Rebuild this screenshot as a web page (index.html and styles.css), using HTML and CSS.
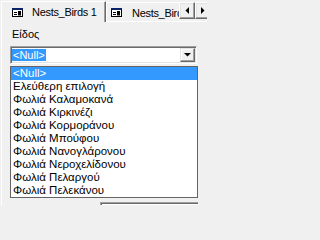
FILE: index.html
```html
<!DOCTYPE html>
<html>
<head>
<meta charset="utf-8">
<link rel="stylesheet" href="styles.css">
</head>
<body>
<div class="tabs">
  <div class="tab active">
    <svg class="ico" width="11" height="9" viewBox="0 0 11 9"><rect x="0.5" y="0.5" width="10" height="8" fill="#fff" stroke="#000"/><rect x="0" y="0" width="11" height="2" fill="#0a246a"/><path d="M2 4.5h3M2 6.5h3" stroke="#000"/><rect x="6.5" y="3.5" width="2" height="1.5" fill="none" stroke="#000"/><rect x="6.5" y="5.5" width="2" height="1.5" fill="none" stroke="#000"/></svg>
    <span>Nests_Birds 1</span>
  </div>
  <div class="tab inactive">
    <svg class="ico" width="11" height="9" viewBox="0 0 11 9"><rect x="0.5" y="0.5" width="10" height="8" fill="#fff" stroke="#000"/><rect x="0" y="0" width="11" height="2" fill="#0a246a"/><path d="M2 4.5h3M2 6.5h3" stroke="#000"/><rect x="6.5" y="3.5" width="2" height="1.5" fill="none" stroke="#000"/><rect x="6.5" y="5.5" width="2" height="1.5" fill="none" stroke="#000"/></svg>
    <span>Nests_Birds 2</span>
  </div>
  <div class="scroll">
    <div class="sbtn"><svg width="4" height="7" viewBox="0 0 4 7"><path d="M4 0V7L0.5 3.5Z" fill="#000"/></svg></div>
    <div class="sbtn"><svg width="4" height="7" viewBox="0 0 4 7"><path d="M0 0V7L3.5 3.5Z" fill="#000"/></svg></div>
  </div>
</div>
<div class="panel">
  <div class="label">Είδος</div>
  <div class="combo">
    <div class="field"><span class="sel">&lt;Null&gt;</span></div>
    <div class="dbtn"><svg width="7" height="4" viewBox="0 0 7 4"><path d="M0 0H7L3.5 3.5Z" fill="#000"/></svg></div>
  </div>
  <ul class="list">
    <li class="hl">&lt;Null&gt;</li>
    <li>Ελεύθερη επιλογή</li>
    <li>Φωλιά Καλαμοκανά</li>
    <li>Φωλιά Κιρκινέζι</li>
    <li>Φωλιά Κορμοράνου</li>
    <li>Φωλιά Μπούφου</li>
    <li>Φωλιά Νανογλάρονου</li>
    <li>Φωλιά Νεροχελίδονου</li>
    <li>Φωλιά Πελαργού</li>
    <li>Φωλιά Πελεκάνου</li>
  </ul>
  <div class="next"></div>
</div>
</body>
</html>
```

FILE: styles.css
```css
html, body {
  margin: 0;
  padding: 0;
  width: 207px;
  height: 205px;
  overflow: hidden;
  background: #f0f0f0;
}
body {
  font-family: "Liberation Sans", Arial, sans-serif;
  font-size: 11px;
  color: #000;
}
.tabs {
  position: relative;
  display: flex;
  align-items: flex-end;
  height: 21px;
  padding-left: 1px;
  box-sizing: border-box;
}
.tab {
  display: flex;
  align-items: center;
  flex: none;
  box-sizing: border-box;
  white-space: nowrap;
  overflow: hidden;
  background: #f0f0f0;
  border-top: 1px solid #fff;
  border-left: 1px solid #fff;
  font-size: 11px;
  letter-spacing: -0.3px;
}
.tab .ico {
  flex: none;
  display: block;
}
.tab.active {
  position: relative;
  z-index: 1;
  width: 105px;
  height: 21px;
  margin-bottom: -1px;
  padding-left: 10px;
  border-right: 1px solid #696969;
  box-shadow: inset -1px 0 #a0a0a0;
}
.tab.active span {
  margin-left: 9px;
}
.tab.inactive {
  width: 120px;
  height: 19px;
  padding-left: 4px;
  padding-top: 1px;
}
.tab.inactive span {
  margin-left: 10px;
}
.scroll {
  position: absolute;
  left: 179px;
  top: 2px;
  display: flex;
  z-index: 2;
}
.sbtn {
  width: 16px;
  height: 17px;
  box-sizing: border-box;
  background: #f0f0f0;
  border: 1px solid;
  border-color: #fff #696969 #696969 #fff;
  box-shadow: inset -1px -1px #a0a0a0, inset 1px 1px #e3e3e3;
  display: flex;
  align-items: center;
  justify-content: center;
}
.sbtn svg { display: block; }
.panel {
  border-top: 1px solid #fff;
  border-left: 1px solid #fff;
  margin-left: 1px;
  padding-left: 8px;
  height: 184px;
  box-sizing: border-box;
}
.label {
  padding-left: 2px;
  margin-top: 6px;
  line-height: 13px;
}
.combo {
  margin-top: 5px;
  width: 187px;
  height: 18px;
  box-sizing: border-box;
  border: 1px solid;
  border-color: #a0a0a0 #fff #fff #a0a0a0;
  box-shadow: inset 1px 1px #696969, inset -1px -1px #e3e3e3;
  background: #fff;
  padding: 1px;
  display: flex;
  align-items: center;
}
.field {
  flex: 1;
  display: flex;
}
.sel {
  background: #3399ff;
  color: #fff;
  height: 12px;
  line-height: 12px;
  padding: 0 1px;
}
.dbtn {
  width: 15px;
  height: 14px;
  box-sizing: border-box;
  background: #f0f0f0;
  border: 1px solid;
  border-color: #e3e3e3 #696969 #696969 #e3e3e3;
  box-shadow: inset -1px -1px #a0a0a0, inset 1px 1px #fff;
  display: flex;
  align-items: center;
  justify-content: center;
}
.dbtn svg { display: block; }
.list {
  list-style: none;
  margin: 2px 0 0 0;
  padding: 0;
  width: 188px;
  box-sizing: border-box;
  border: 1px solid #646464;
  background: #fff;
  font-size: 11.5px;
}
.list li {
  height: 13px;
  line-height: 13px;
  padding-left: 2px;
  white-space: nowrap;
}
.list li.hl {
  background: #3399ff;
  color: #fff;
}
.next {
  margin: 4px 0 0 90px;
  width: 98px;
  height: 10px;
  box-sizing: border-box;
  border-top: 1px solid #a0a0a0;
  border-left: 1px solid #a0a0a0;
  box-shadow: inset 1px 1px #696969;
  background: #fff;
}
```
